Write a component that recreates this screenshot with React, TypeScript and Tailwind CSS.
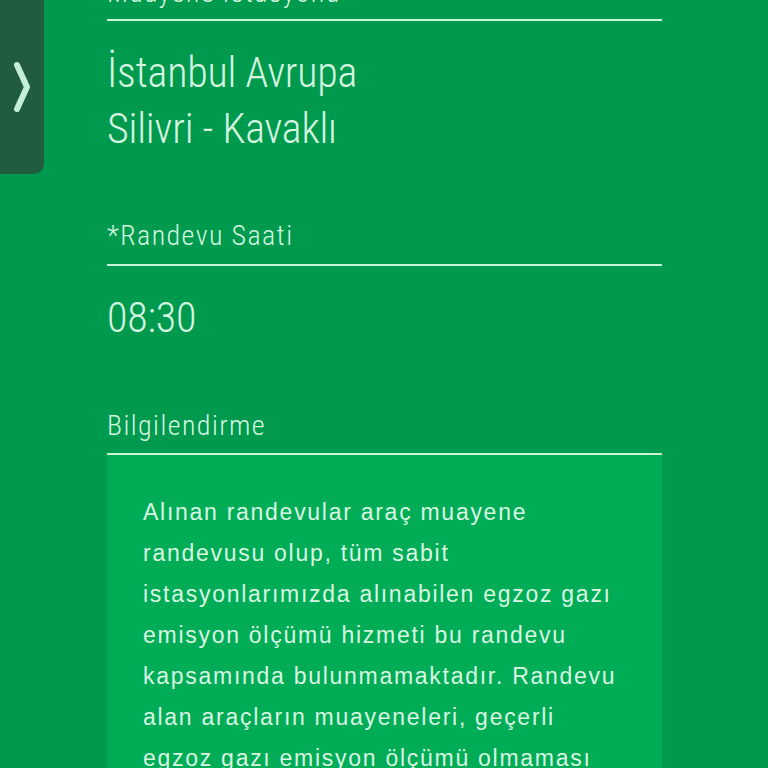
import React from "react";

// Randevu detail screen: station, time and info box on a green background

const condensed =
  "font-['Roboto_Condensed','Liberation_Sans_Narrow','DejaVu_Sans_Condensed',Roboto,sans-serif] font-stretch-condensed";

function Label({ children }: { children: React.ReactNode }): React.ReactElement {
  return (
    <p className={`${condensed} text-[28px] leading-[36px] font-light tracking-[0.05em] text-[#d6f6e0]`}>
      {children}
    </p>
  );
}

function Divider(): React.ReactElement {
  return <div className="h-[2px] w-full bg-[#c9f3d7]" />;
}

function Value({ children, className = "" }: { children: React.ReactNode; className?: string }): React.ReactElement {
  return (
    <p className={`${condensed} text-[42px] leading-[56px] font-light tracking-[-0.005em] text-[#d6f6e0] ${className}`}>
      {children}
    </p>
  );
}

export default function App(): React.ReactElement {
  return (
    <div className="relative h-[768px] w-full overflow-hidden bg-[#009a4e]">
      {/* Side drawer handle */}
      <button
        type="button"
        className="absolute left-0 top-[-20px] flex h-[194px] w-[44px] items-center justify-center rounded-r-[10px] bg-[#215c3f] pt-[20px]"
        aria-label="Menü"
      >
        <svg width="20" height="52" viewBox="0 0 20 52" fill="none">
          <path
            d="M5 4 L15 26 L5 48"
            stroke="#c4efd4"
            strokeWidth="6"
            strokeLinecap="round"
            strokeLinejoin="round"
          />
        </svg>
      </button>

      <div className="ml-[107px] mt-[-25px] flex w-[555px] flex-col">
        <Label>Muayene İstasyonu</Label>
        <div className="mt-[8px]">
          <Divider />
        </div>
        <Value className="mt-[24px]">
          İstanbul Avrupa
          <br />
          Silivri - Kavaklı
        </Value>

        <div className="mt-[61px]">
          <Label>*Randevu Saati</Label>
        </div>
        <div className="mt-[10px]">
          <Divider />
        </div>
        <Value className="mt-[24px]">08:30</Value>

        <div className="mt-[62px]">
          <Label>Bilgilendirme</Label>
        </div>
        <div className="mt-[9px]">
          <Divider />
        </div>
        <div className="bg-[#00ad56] pl-[36px] pr-[40px] pt-[37px] pb-[40px]">
          <p className="font-['Liberation_Sans',Arial,sans-serif] text-[23px] leading-[41px] tracking-[0.075em] text-[#d9f7e3]">
            Alınan randevular araç muayene randevusu olup, tüm sabit istasyonlarımızda alınabilen egzoz gazı
            emisyon ölçümü hizmeti bu randevu kapsamında bulunmamaktadır. Randevu alan araçların muayeneleri,
            geçerli egzoz gazı emisyon ölçümü olmaması durumunda yapılamayacaktır.
          </p>
        </div>
      </div>
    </div>
  );
}
